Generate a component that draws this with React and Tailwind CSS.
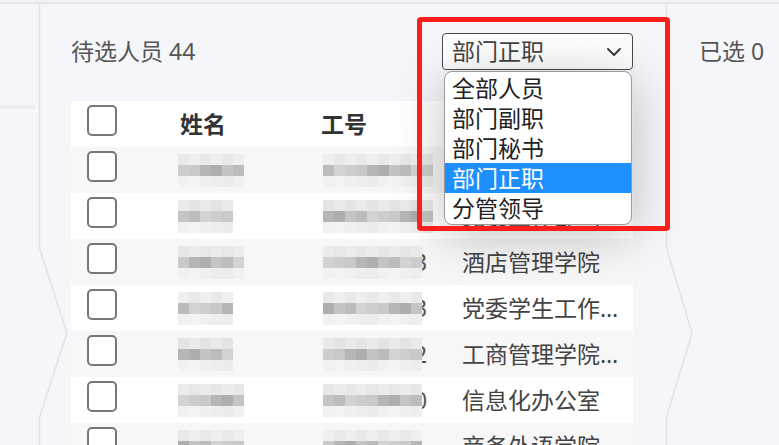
import { ChevronDown } from "lucide-react";

const font = { fontFamily: '"Noto Sans", "Noto Sans CJK SC", sans-serif' };

const shadesTop = ["#e9e9e9", "#ececec", "#e4e4e4", "#efefef", "#e7e7e7", "#eaeaea"];
const shadesMid = ["#c4c4c4", "#b6b6b6", "#cdcdcd", "#bcbcbc", "#aeaeae", "#c9c9c9", "#d3d3d3"];
const shadesBot = ["#f0f0f0", "#ececec", "#f3f3f3", "#eeeeee", "#f1f1f1"];

function Mosaic({ cols, seed = 0 }) {
  const rows = [shadesTop, shadesMid, shadesBot];
  return (
    <div className="relative z-10 flex flex-col">
      {rows.map((set, r) => (
        <div key={r} className="flex">
          {Array.from({ length: cols }).map((_, c) => (
            <div
              key={c}
              className="h-[11px] w-[11px]"
              style={{ backgroundColor: set[(c * 3 + seed * 5 + r * 2) % set.length] }}
            />
          ))}
        </div>
      ))}
    </div>
  );
}

const rows = [
  { name: 6, id: 10, digit: "", dept: "党委办公室" },
  { name: 5, id: 10, digit: "", dept: "党委工作部（统战部）" },
  { name: 6, id: 9, digit: "3", dept: "酒店管理学院" },
  { name: 5, id: 9, digit: "3", dept: "党委学生工作部（处）" },
  { name: 5, id: 9, digit: "2", dept: "工商管理学院（旅游学院）" },
  { name: 6, id: 9, digit: "0", dept: "信息化办公室" },
  { name: 6, id: 9, digit: "", dept: "商务外语学院" },
];

function Checkbox() {
  return <div className="mt-[4px] h-[31px] w-[30px] rounded-[5px] border-2 border-[#777] bg-white" />;
}

export default function App() {
  return (
    <div className="relative h-[445px] w-[779px] overflow-hidden bg-[#f5f6fa] text-[23px]" style={font}>
      <div className="h-[4px] border-b-2 border-[#e3e4f0] bg-[#f3f3f7]" />
      <div className="flex">
        <div className="w-[40px] shrink-0">
          <div className="mt-[101px] h-[4px] w-[35px] bg-[#ebecf0]" />
        </div>

        <div className="w-[626px] shrink-0 pl-[31px] pt-[29px]">
          <div className="flex h-[37px] w-[562px] items-center justify-between">
            <span className="text-[#555]">待选人员 44</span>
            <div className="flex h-[37px] w-[191px] items-center justify-between rounded-[4px] border-[1.5px] border-[#4a4a4a] bg-[#fdfdfd] pl-[9px] pr-[6px] text-[#444]">
              <span className="leading-none">部门正职</span>
              <ChevronDown size={24} strokeWidth={1.8} className="text-[#333]" />
            </div>
          </div>

          <div className="mt-[31px] w-[562px]">
            <div className="flex h-[46px] bg-white font-bold text-[#333]">
              <div className="w-[94px] pl-[16px]">
                <Checkbox />
              </div>
              <div className="flex w-[141px] items-center pl-[15px]">姓名</div>
              <div className="flex w-[141px] items-center pl-[15px]">工号</div>
              <div className="flex w-[186px] items-center pl-[15px]">部门</div>
            </div>
            {rows.map((row, i) => (
              <div key={i} className={`flex h-[46px] ${i % 2 === 0 ? "bg-[#f7f7f7]" : "bg-white"}`}>
                <div className="w-[94px] pl-[16px]">
                  <Checkbox />
                </div>
                <div className="flex w-[141px] items-center pl-[13px]">
                  <Mosaic cols={row.name} seed={i} />
                </div>
                <div className="flex w-[141px] items-center pl-[17px] text-[#555]">
                  <Mosaic cols={row.id} seed={i + 3} />
                  {row.digit && <span className="-ml-[8px]">{row.digit}</span>}
                </div>
                <div className="flex w-[186px] items-center pl-[15px] pr-[4px] text-[#444]">
                  <span className="truncate">{row.dept}</span>
                </div>
              </div>
            ))}
          </div>
        </div>

        <div className="flex-1 pl-[33px] pt-[29px]">
          <div className="flex h-[37px] items-center text-[#555]">已选 0</div>
        </div>
      </div>

      <svg className="pointer-events-none absolute inset-0" width="779" height="445">
        <polyline points="39.5,4 39.5,248 67,333 39.5,417 39.5,445" fill="none" stroke="#e6dfe8" strokeWidth="1.5" />
        <polyline points="666.5,4 666.5,248 692,333 666.5,417 666.5,445" fill="none" stroke="#e6dfe8" strokeWidth="1.5" />
      </svg>

      <div className="absolute left-[444px] top-[71px] z-20 w-[188px] overflow-hidden rounded-[8px] border border-[#9a9a9a] bg-white py-[1px] text-[#222] shadow-[0_10px_50px_rgba(0,0,0,0.25)]">
        {["全部人员", "部门副职", "部门秘书", "部门正职", "分管领导"].map((o) => (
          <div
            key={o}
            className={`h-[30px] pl-[7px] leading-[30px] ${o === "部门正职" ? "bg-[#1e8fff] text-white" : ""}`}
          >
            {o}
          </div>
        ))}
      </div>

      <div className="pointer-events-none absolute left-[417px] top-[17px] z-30 h-[214px] w-[253px] rounded-[4px] border-[5px] border-[#ff1f1a]" />
    </div>
  );
}
